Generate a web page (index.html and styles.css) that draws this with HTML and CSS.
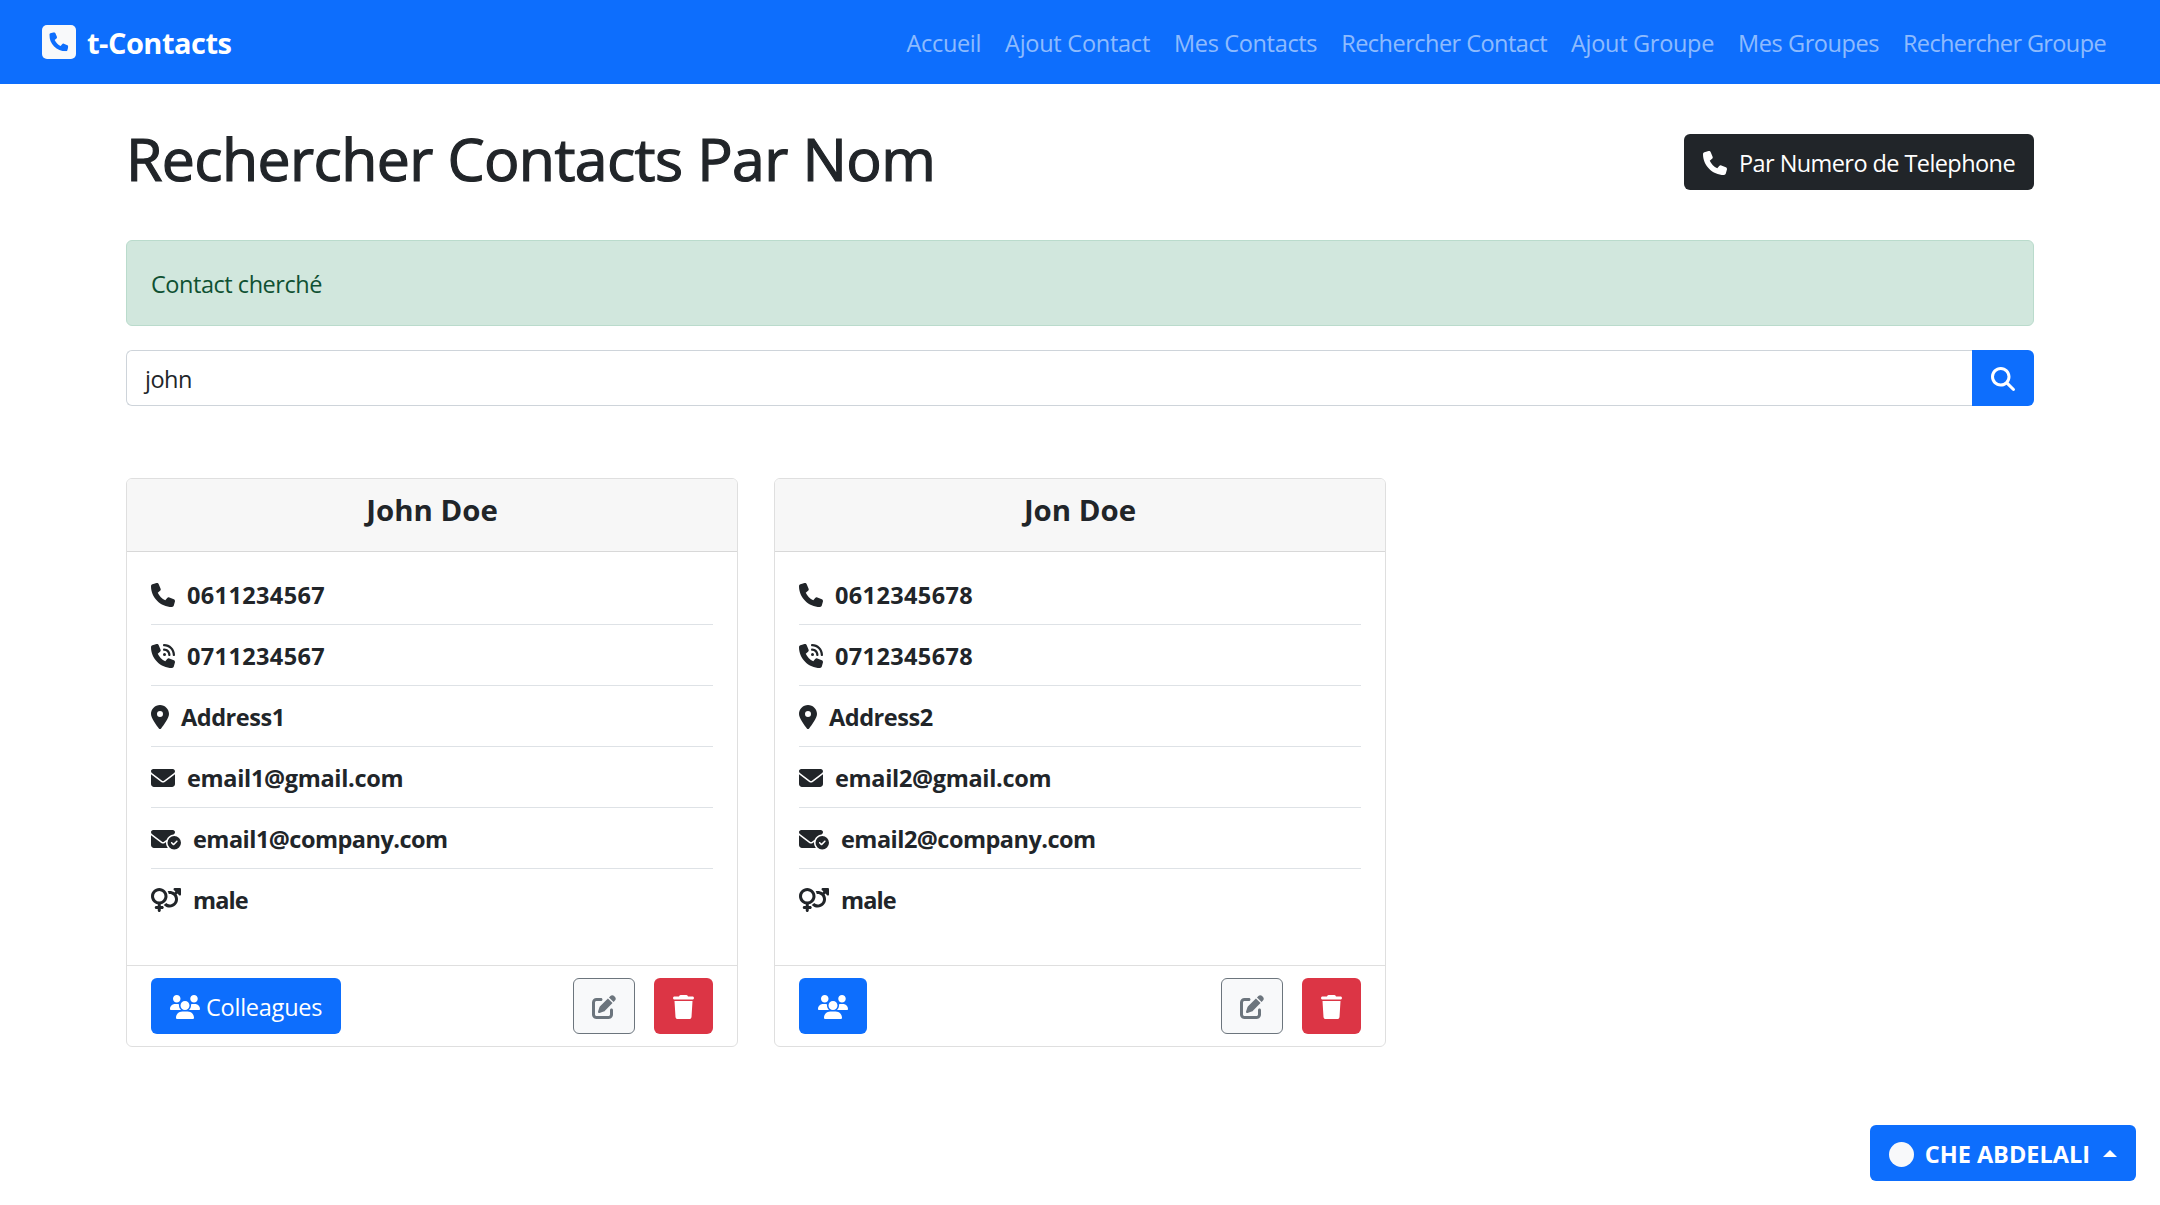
FILE: index.html
```html
<!DOCTYPE html>
<html lang="fr">
<head>
<meta charset="utf-8">
<title>t-Contacts</title>
<link rel="stylesheet" href="styles.css">
</head>
<body>
<svg class="sprite" aria-hidden="true">
  <symbol id="phone" viewBox="0 0 512 512"><path d="M164.9 24.6c-7.7-18.6-28-28.5-47.4-23.2l-88 24C12.1 30.2 0 46 0 64C0 311.4 200.6 512 448 512c18 0 33.8-12.1 38.6-29.5l24-88c5.3-19.4-4.6-39.7-23.2-47.4l-96-40c-16.3-6.8-35.2-2.1-46.3 11.6L304.7 368C234.3 334.7 177.3 277.7 144 207.3L193.3 167c13.7-11.2 18.4-30 11.6-46.3l-40-96z"/></symbol>
  <symbol id="phone-volume" viewBox="0 0 512 512"><path d="M280 0C408.1 0 512 103.9 512 232c0 13.3-10.7 24-24 24s-24-10.7-24-24c0-101.6-82.4-184-184-184c-13.3 0-24-10.7-24-24s10.7-24 24-24zm8 192a32 32 0 1 1 0 64 32 32 0 1 1 0-64zm-32-72c0-13.3 10.7-24 24-24c75.1 0 136 60.9 136 136c0 13.3-10.7 24-24 24s-24-10.7-24-24c0-48.6-39.4-88-88-88c-13.3 0-24-10.7-24-24zM117.5 1.4c19.4-5.3 39.7 4.6 47.4 23.2l40 96c6.8 16.3 2.1 35.2-11.6 46.3L144 207.3c33.3 70.4 90.3 127.4 160.7 160.7L345 318.7c11.2-13.7 30-18.4 46.3-11.6l96 40c18.6 7.7 28.5 28 23.2 47.4l-24 88C481.8 499.9 466 512 448 512C200.6 512 0 311.4 0 64C0 46 12.1 30.2 29.5 25.4l88-24z"/></symbol>
  <symbol id="pin" viewBox="0 0 384 512"><path d="M215.7 499.2C267 435 384 279.4 384 192C384 86 298 0 192 0S0 86 0 192c0 87.4 117 243 168.3 307.2c12.3 15.3 35.1 15.3 47.4 0zM192 128a64 64 0 1 1 0 128 64 64 0 1 1 0-128z"/></symbol>
  <symbol id="envelope" viewBox="0 0 512 512"><path d="M48 64C21.5 64 0 85.5 0 112c0 15.1 7.1 29.3 19.2 38.4L236.8 313.6c11.4 8.5 27 8.5 38.4 0L492.8 150.4c12.1-9.1 19.2-23.3 19.2-38.4c0-26.5-21.5-48-48-48H48zM0 176V384c0 35.3 28.7 64 64 64H448c35.3 0 64-28.7 64-64V176L294.4 339.2c-22.8 17.1-54 17.1-76.8 0L0 176z"/></symbol>
  <symbol id="envelope-check" viewBox="0 0 640 512"><path d="M48 64C21.5 64 0 85.5 0 112c0 15.1 7.1 29.3 19.2 38.4L236.8 313.6c11.4 8.5 27 8.5 38.4 0l57.4-43c23.9-59.8 79.7-103.3 146.3-109.8l13.9-10.4c12.1-9.1 19.2-23.3 19.2-38.4c0-26.5-21.5-48-48-48H48zM294.4 339.2c-22.8 17.1-54 17.1-76.8 0L0 176V384c0 35.3 28.7 64 64 64H360.2C335.1 417.6 320 378.5 320 336c0-5.6 .3-11.1 .8-16.6l-26.4 19.8zM640 336a144 144 0 1 0 -288 0 144 144 0 1 0 288 0zm-76.7-43.3c6.2 6.2 6.2 16.4 0 22.6l-72 72c-6.2 6.2-16.4 6.2-22.6 0l-40-40c-6.2-6.2-6.2-16.4 0-22.6s16.4-6.2 22.6 0L480 353.4l60.7-60.7c6.2-6.2 16.4-6.2 22.6 0z"/></symbol>
  <symbol id="venus-mars" viewBox="0 0 640 512"><path d="M176 288a112 112 0 1 0 0-224 112 112 0 1 0 0 224zM352 176c0 86.3-62.1 158.1-144 173.1V384h32c17.7 0 32 14.3 32 32s-14.3 32-32 32H208v32c0 17.7-14.3 32-32 32s-32-14.3-32-32V448H112c-17.7 0-32-14.3-32-32s14.3-32 32-32h32V349.1C62.1 334.1 0 262.3 0 176C0 78.8 78.8 0 176 0s176 78.8 176 176zM271.9 360.6c19.3-10.1 36.9-23.1 52.1-38.4c20 18.5 46.7 29.8 76.1 29.8c61.9 0 112-50.1 112-112s-50.1-112-112-112c-7.2 0-14.3 .7-21.1 2c-4.9-21.5-13-41.7-24-60.2C369.3 66 384.4 64 400 64c37 0 71.4 11.4 99.8 31l20.6-20.6L487 41c-6.9-6.9-8.9-17.2-5.2-26.2S494.3 0 504 0H616c13.3 0 24 10.7 24 24V136c0 9.7-5.8 18.5-14.8 22.2s-19.3 1.7-26.2-5.2l-33.4-33.4L545 140.2c19.5 28.4 31 62.7 31 99.8c0 97.2-78.8 176-176 176c-50.5 0-96-21.3-128.1-55.4z"/></symbol>
  <symbol id="search" viewBox="0 0 512 512"><path d="M416 208c0 45.9-14.9 88.3-40 122.7L502.6 457.4c12.5 12.5 12.5 32.8 0 45.3s-32.8 12.5-45.3 0L330.7 376c-34.4 25.2-76.8 40-122.7 40C93.1 416 0 322.9 0 208S93.1 0 208 0S416 93.1 416 208zM208 352a144 144 0 1 0 0-288 144 144 0 1 0 0 288z"/></symbol>
  <symbol id="users" viewBox="0 0 640 512"><path d="M144 160c-44.2 0-80-35.8-80-80S99.8 0 144 0s80 35.8 80 80s-35.8 80-80 80zm368 0c-44.2 0-80-35.8-80-80s35.8-80 80-80s80 35.8 80 80s-35.8 80-80 80zM0 298.7C0 239.8 47.8 192 106.7 192h42.7c15.9 0 31 3.5 44.6 9.7c-1.3 7.2-1.9 14.7-1.9 22.3c0 38.2 16.8 72.5 43.3 96c-.2 0-.4 0-.7 0H21.3C9.6 320 0 310.4 0 298.7zM405.3 320c-.2 0-.4 0-.7 0c26.6-23.5 43.3-57.8 43.3-96c0-7.6-.7-15-1.9-22.3c13.6-6.3 28.7-9.7 44.6-9.7h42.7C592.2 192 640 239.8 640 298.7c0 11.8-9.6 21.3-21.3 21.3H405.3zM416 224c0 53-43 96-96 96s-96-43-96-96s43-96 96-96s96 43 96 96zM128 485.3C128 411.7 187.7 352 261.3 352H378.7C452.3 352 512 411.7 512 485.3c0 14.7-11.9 26.7-26.7 26.7H154.7c-14.7 0-26.7-11.9-26.7-26.7z"/></symbol>
  <symbol id="edit" viewBox="0 0 512 512"><path d="M471.6 21.7c-21.9-21.9-57.3-21.9-79.2 0L362.3 51.7l97.9 97.9 30.1-30.1c21.9-21.9 21.9-57.3 0-79.2L471.6 21.7zm-299.2 220c-6.1 6.1-10.8 13.6-13.5 21.9l-29.6 88.8c-2.9 8.6-.6 18.1 5.8 24.6s15.9 8.7 24.6 5.8l88.8-29.6c8.2-2.7 15.7-7.4 21.9-13.5L437.7 172.3 339.7 74.3 172.4 241.7zM96 64C43 64 0 107 0 160V416c0 53 43 96 96 96H352c53 0 96-43 96-96V320c0-17.7-14.3-32-32-32s-32 14.3-32 32v96c0 17.7-14.3 32-32 32H96c-17.7 0-32-14.3-32-32V160c0-17.7 14.3-32 32-32h96c17.7 0 32-14.3 32-32s-14.3-32-32-32H96z"/></symbol>
  <symbol id="trash" viewBox="0 0 448 512"><path d="M135.2 17.7L128 32H32C14.3 32 0 46.3 0 64S14.3 96 32 96H416c17.7 0 32-14.3 32-32s-14.3-32-32-32H320l-7.2-14.3C307.4 6.8 296.3 0 284.2 0H163.8c-12.1 0-23.2 6.8-28.6 17.7zM416 128H32L53.2 467c1.6 25.3 22.6 45 47.9 45H346.9c25.3 0 46.3-19.7 47.9-45L416 128z"/></symbol>
</svg>

<nav class="navbar">
  <a class="brand">
    <svg class="brand-icon" viewBox="0 0 34 34"><rect width="34" height="34" rx="5" fill="#f8f9fa"/><use href="#phone" x="7.3" y="7.3" width="19" height="19"/></svg>
    <span class="brand-name">t-Contacts</span>
  </a>
  <div class="nav-links">
    <a class="nav-link home">Accueil</a>
    <a class="nav-link add-contact">Ajout Contact</a>
    <a class="nav-link my-contacts">Mes Contacts</a>
    <a class="nav-link find-contact">Rechercher Contact</a>
    <a class="nav-link add-group">Ajout Groupe</a>
    <a class="nav-link my-groups">Mes Groupes</a>
    <a class="nav-link find-group">Rechercher Groupe</a>
  </div>
</nav>

<main class="container">
  <header class="page-head">
    <h1 class="page-title">Rechercher Contacts Par Nom</h1>
    <a class="btn btn-dark"><svg class="icon"><use href="#phone"/></svg><span>Par Numero de Telephone</span></a>
  </header>
  <div class="alert">Contact cherché</div>
  <form class="search">
    <div class="search-input">john</div>
    <a class="btn btn-primary search-btn"><svg class="icon"><use href="#search"/></svg></a>
  </form>

  <section class="cards">
    <article class="card">
      <div class="card-header"><h5 class="card-title">John Doe</h5></div>
      <ul class="card-body">
        <li class="row number"><svg class="icon"><use href="#phone"/></svg>0611234567</li>
        <li class="row number"><svg class="icon"><use href="#phone-volume"/></svg>0711234567</li>
        <li class="row address"><svg class="icon icon-pin"><use href="#pin"/></svg>Address1</li>
        <li class="row email"><svg class="icon"><use href="#envelope"/></svg>email1@gmail.com</li>
        <li class="row work-email"><svg class="icon icon-wide"><use href="#envelope-check"/></svg>email1@company.com</li>
        <li class="row gender"><svg class="icon icon-wide"><use href="#venus-mars"/></svg>male</li>
      </ul>
      <div class="card-footer">
        <a class="btn btn-primary group-btn"><svg class="icon icon-wide"><use href="#users"/></svg><span>Colleagues</span></a>
        <div class="actions">
          <a class="btn btn-light"><svg class="icon"><use href="#edit"/></svg></a>
          <a class="btn btn-danger"><svg class="icon icon-trash"><use href="#trash"/></svg></a>
        </div>
      </div>
    </article>
    <article class="card">
      <div class="card-header"><h5 class="card-title">Jon Doe</h5></div>
      <ul class="card-body">
        <li class="row number"><svg class="icon"><use href="#phone"/></svg>0612345678</li>
        <li class="row number"><svg class="icon"><use href="#phone-volume"/></svg>0712345678</li>
        <li class="row address"><svg class="icon icon-pin"><use href="#pin"/></svg>Address2</li>
        <li class="row email"><svg class="icon"><use href="#envelope"/></svg>email2@gmail.com</li>
        <li class="row work-email"><svg class="icon icon-wide"><use href="#envelope-check"/></svg>email2@company.com</li>
        <li class="row gender"><svg class="icon icon-wide"><use href="#venus-mars"/></svg>male</li>
      </ul>
      <div class="card-footer">
        <a class="btn btn-primary group-btn"><svg class="icon icon-wide"><use href="#users"/></svg></a>
        <div class="actions">
          <a class="btn btn-light"><svg class="icon"><use href="#edit"/></svg></a>
          <a class="btn btn-danger"><svg class="icon icon-trash"><use href="#trash"/></svg></a>
        </div>
      </div>
    </article>
  </section>
</main>

<a class="btn btn-primary user-menu"><span class="avatar"></span><span class="user-name">CHE ABDELALI</span><span class="caret"></span></a>
</body>
</html>
```
FILE: styles.css
```css
* { box-sizing: border-box; }

body {
  margin: 0;
  background: #fff;
  color: #212529;
  font: 400 23.5px/36px "Open Sans", "Noto Sans", sans-serif;
}

.sprite { display: none; }
.icon { width: 24px; height: 24px; flex: none; fill: currentColor; }
.icon-pin { width: 18px; }
.icon-trash { width: 21px; }
.icon-wide { width: 30px; }

/* Navbar */
.navbar {
  display: flex;
  align-items: center;
  justify-content: space-between;
  height: 84px;
  padding: 0 42px;
  background: #0d6efd;
}
.brand {
  display: flex;
  align-items: center;
  gap: 11px;
  color: #fff;
  font-size: 29px;
  font-weight: 700;
  letter-spacing: -0.5px;
}
.brand-icon { width: 34px; height: 34px; fill: #0d6efd; }
.brand-name { padding-top: 2px; }
.nav-links { display: flex; padding-top: 2px; }
.nav-link { padding: 0 12px; color: rgba(255, 255, 255, 0.55); }
.home { letter-spacing: -0.35px; }
.add-contact { letter-spacing: -0.25px; }
.my-contacts { letter-spacing: -0.34px; }
.find-contact { letter-spacing: -0.52px; }
.add-group { letter-spacing: -0.3px; }
.my-groups { letter-spacing: -0.43px; }
.find-group { letter-spacing: -0.62px; }

/* Page */
.container { width: 1908px; margin: 0 auto; }
.page-head {
  display: flex;
  align-items: flex-start;
  justify-content: space-between;
  padding-top: 38px;
}
.page-title {
  margin: 0;
  font-size: 59px;
  line-height: 72px;
  font-weight: 500;
  letter-spacing: -0.62px;
  -webkit-text-stroke: 1.2px currentColor;
}

.btn {
  display: inline-flex;
  align-items: center;
  height: 56px;
  padding: 2px 19px 0;
  border-radius: 6px;
  color: #fff;
}
.btn-dark { margin-top: 12px; gap: 12px; background: #212529; letter-spacing: -0.58px; }
.btn-primary { background: #0d6efd; }
.btn-light { padding: 1px 18px 0; border: 1px solid #6c757d; background: #f8f9fa; color: #6c757d; }
.btn-danger { background: #dc3545; }

.alert {
  height: 86px;
  margin-top: 46px;
  padding: 25px 24px 0;
  border: 1px solid #badbcc;
  border-radius: 6px;
  background: #d1e7dd;
  color: #0f5132;
  letter-spacing: -0.46px;
}

.search { display: flex; margin: 24px 0 0; }
.search-input {
  flex: 1;
  height: 56px;
  padding: 10px 18px;
  border: 1px solid #ced4da;
  border-right: 0;
  border-radius: 6px 0 0 6px;
  letter-spacing: -0.5px;
}
.search-btn { border-radius: 0 6px 6px 0; }

/* Contact cards */
.cards { display: flex; gap: 36px; margin-top: 72px; }
.card { width: 612px; border: 1px solid #dfdfdf; border-radius: 6px; overflow: hidden; }
.card-header {
  height: 73px;
  padding-top: 13px;
  border-bottom: 1px solid #d8d8d8;
  background: #f7f7f7;
  text-align: center;
}
.card-title { margin: 0; font-size: 29.4px; font-weight: 700; letter-spacing: 0; }
.card-body { margin: 0; padding: 12px 24px 35px; list-style: none; }
.row {
  display: flex;
  align-items: center;
  gap: 12px;
  height: 61px;
  padding-top: 1px;
  border-bottom: 1px solid #dee2e6;
  font-weight: 700;
}
.row:last-child { border-bottom: 0; }
.number { letter-spacing: 0.37px; }
.address { letter-spacing: -0.45px; }
.email { letter-spacing: -0.32px; }
.work-email { letter-spacing: -0.52px; }
.gender { letter-spacing: -0.9px; }
.card-footer {
  display: flex;
  justify-content: space-between;
  padding: 12px 24px;
  border-top: 1px solid #dfdfdf;
}
.group-btn { gap: 6px; letter-spacing: -0.24px; }
.actions { display: flex; gap: 19px; }

/* Account menu floating over the page */
.user-menu {
  position: fixed;
  right: 24px;
  bottom: 24px;
  font-weight: 700;
}
.avatar { width: 25px; height: 25px; border-radius: 50%; background: #f8f9fa; }
.user-name { margin-left: 11px; }
.caret {
  margin: 0 0 2px 13px;
  border-right: 7px solid transparent;
  border-bottom: 7px solid #fff;
  border-left: 7px solid transparent;
}
```
